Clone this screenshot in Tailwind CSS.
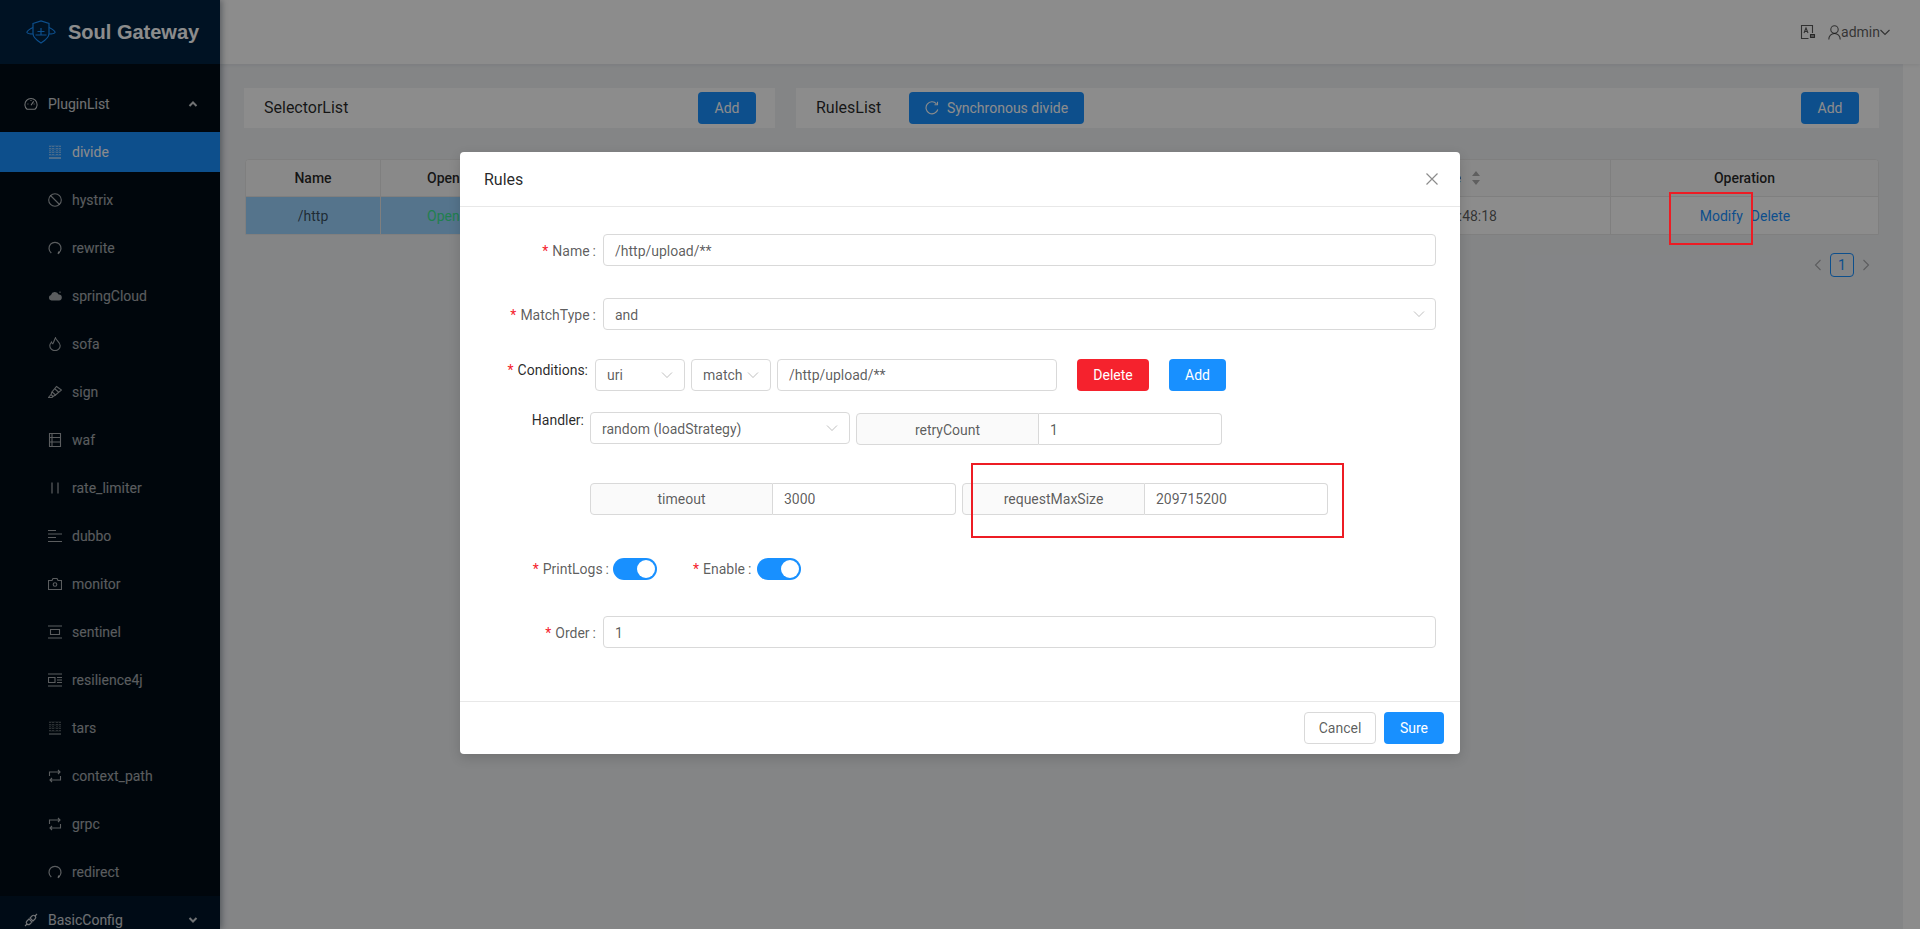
<!DOCTYPE html>
<html lang="en">
<head>
<meta charset="utf-8">
<title>Soul Gateway</title>
<script src="https://cdn.jsdelivr.net/npm/@tailwindcss/browser@4"></script>
</head>
<body class="m-0">
<div class="relative flex h-[929px] w-[1920px] overflow-hidden bg-white text-sm font-['Roboto',sans-serif] text-black/65">

  <!-- Sidebar -->
  <aside class="z-10 flex w-[220px] shrink-0 flex-col bg-[#000c17] text-white/65 shadow-[2px_0_6px_rgba(0,21,41,0.35)]">
    <div class="flex h-16 items-center bg-[#002140] pl-[26px] shrink-0">
      <svg class="h-[24px] w-[30px]" viewBox="0 0 30 24" fill="none" stroke="#1890ff" stroke-width="1.2"><path d="M7 3.500 15 1l8 2.500v10c0 4-4 7-8 9.500-4-2.500-8-5.500-8-9.500z"/><path d="M7 7.500C3 9.500.5 11 1 12.500c.8 1.500 5 1.500 6 1.500M23 7.500c4 2 6.500 3.500 6 5-.8 1.500-5 1.500-6 1.500"/><path d="M15 8v7M11.500 11.500h7M9.500 15h11"/></svg>
      <span class="ml-3 font-['Liberation_Sans',sans-serif] text-xl leading-none font-bold text-white">Soul Gateway</span>
    </div>
    <div class="flex-1">
      <div class="mt-5 flex h-10 items-center pl-6 pr-[22px] text-white/80">
        <svg class="mr-2.5 h-3.5 w-3.5" viewBox="0 0 16 16" fill="none" stroke="currentColor" stroke-width="1.2"><path d="M3.500 14h9a7 7 0 1 0-9 0z"/><path d="M8 9.500 11 5M4 8h1M11 8h1M8 3.500v1"/></svg>
        <span>PluginList</span>
        <svg class="ml-auto h-2.5 w-2.5" viewBox="0 0 10 10" fill="none" stroke="currentColor" stroke-width="2"><path d="M1.500 7 5 3.500 8.500 7"/></svg>
      </div>
      <div class="mt-2 flex h-10 items-center bg-[#1890ff] pl-12 text-white">
        <svg class="mr-2.5 h-3.5 w-3.5" viewBox="0 0 14 14" fill="none" stroke="currentColor"><path stroke-opacity="0.7" stroke-dasharray="1 1" d="M1.500 1h11M1.500 4h11M1.500 7h11M1.500 10h11M2 1v9.500M5 1v9.500M9 1v9.500M12 1v9.500"/><path d="M1 13h12"/></svg>
        <span>divide</span>
      </div>
      <div class="mt-2 flex h-10 items-center pl-12">
        <svg class="mr-2.5 h-3.5 w-3.5" viewBox="0 0 14 14" fill="none" stroke="currentColor" stroke-width="1.100"><circle cx="7" cy="7" r="6.300"/><path d="M2.500 2.500l9 9"/></svg>
        <span>hystrix</span>
      </div>
      <div class="mt-2 flex h-10 items-center pl-12">
        <svg class="mr-2.5 h-3.5 w-3.5" viewBox="0 0 14 14" fill="none" stroke="currentColor" stroke-width="1.200"><path d="M3.300 12A6 6 0 1 1 10.700 12"/><path d="M11 10.500 10.200 13" stroke-width="1.500"/></svg>
        <span>rewrite</span>
      </div>
      <div class="mt-2 flex h-10 items-center pl-12">
        <svg class="mr-2.5 h-3.5 w-3.5" viewBox="0 0 14 14" fill="currentColor"><path d="M3.500 11.500a2.800 2.800 0 0 1-.5-5.500 4 4 0 0 1 7.600-.5 3 3 0 0 1 .4 6z"/><path d="M11.500 2.500h1v1.500h-1z"/></svg>
        <span>springCloud</span>
      </div>
      <div class="mt-2 flex h-10 items-center pl-12">
        <svg class="mr-2.5 h-3.5 w-3.5" viewBox="0 0 14 14" fill="none" stroke="currentColor" stroke-width="1.100"><path d="M7.500 .8c.3 2.500 4.700 4.500 4.700 8a5.200 4.800 0 0 1-10.400 0c0-1.800 1-3 1.700-3.800.2 1 .6 1.500 1.300 1.800C6 4.500 6.500 2.500 7.500 .8z"/></svg>
        <span>sofa</span>
      </div>
      <div class="mt-2 flex h-10 items-center pl-12">
        <svg class="mr-2.5 h-3.5 w-3.5" viewBox="0 0 14 14" fill="none" stroke="currentColor" stroke-width="1.100"><path d="M8.500 1.500 13.500 5 7.500 10 4 7z"/><path d="M4 7l-1 2.500L5 11.500l2.500-1.500M3 9.500 .5 12.500h3.500L5 11.500M7 4l3.500 3"/></svg>
        <span>sign</span>
      </div>
      <div class="mt-2 flex h-10 items-center pl-12">
        <svg class="mr-2.5 h-3.5 w-3.5" viewBox="0 0 14 14" fill="none" stroke="currentColor" stroke-width="1.100"><path d="M1.500.5h11v13h-11zM1.500 4.500h11M1.500 9h11M4 .5v13"/></svg>
        <span>waf</span>
      </div>
      <div class="mt-2 flex h-10 items-center pl-12">
        <svg class="mr-2.5 h-3.5 w-3.5" viewBox="0 0 14 14" fill="none" stroke="currentColor" stroke-width="1.200"><path d="M4 1.500v11M10 1.500v11"/></svg>
        <span>rate_limiter</span>
      </div>
      <div class="mt-2 flex h-10 items-center pl-12">
        <svg class="mr-2.5 h-3.5 w-3.5" viewBox="0 0 14 14" fill="none" stroke="currentColor" stroke-width="1.100"><path d="M0 1.500h8M0 5h14M0 8.500h8M0 12.500h14"/></svg>
        <span>dubbo</span>
      </div>
      <div class="mt-2 flex h-10 items-center pl-12">
        <svg class="mr-2.5 h-3.5 w-3.5" viewBox="0 0 14 14" fill="none" stroke="currentColor" stroke-width="1.100"><path d="M.5 3.500h3.500L5 1.500h4l1 2h3.500v9H.5z"/><circle cx="7" cy="7.500" r="1.800"/></svg>
        <span>monitor</span>
      </div>
      <div class="mt-2 flex h-10 items-center pl-12">
        <svg class="mr-2.5 h-3.5 w-3.5" viewBox="0 0 14 14" fill="none" stroke="currentColor" stroke-width="1.100"><path d="M0 1h14M0 13h14M2.500 4.500h9v5h-9z"/></svg>
        <span>sentinel</span>
      </div>
      <div class="mt-2 flex h-10 items-center pl-12">
        <svg class="mr-2.5 h-3.5 w-3.5" viewBox="0 0 14 14" fill="none" stroke="currentColor" stroke-width="1.100"><path d="M0 1h14M0 13h14M.5 4.500h6.500v5H.5zM9 4.500h5M9 7h5M9 9.500h5"/></svg>
        <span>resilience4j</span>
      </div>
      <div class="mt-2 flex h-10 items-center pl-12">
        <svg class="mr-2.5 h-3.5 w-3.5" viewBox="0 0 14 14" fill="none" stroke="currentColor"><path stroke-opacity="0.7" stroke-dasharray="1 1" d="M1.500 1h11M1.500 4h11M1.500 7h11M1.500 10h11M2 1v9.500M5 1v9.500M9 1v9.500M12 1v9.500"/><path d="M1 13h12"/></svg>
        <span>tars</span>
      </div>
      <div class="mt-2 flex h-10 items-center pl-12">
        <svg class="mr-2.5 h-3.5 w-3.5" viewBox="0 0 14 14" fill="none" stroke="currentColor" stroke-width="1.100"><path d="M1.500 7V3h10.500M10 1l2 2-2 2M12.500 7v4H2M4 9l-2 2 2 2"/></svg>
        <span>context_path</span>
      </div>
      <div class="mt-2 flex h-10 items-center pl-12">
        <svg class="mr-2.5 h-3.5 w-3.5" viewBox="0 0 14 14" fill="none" stroke="currentColor" stroke-width="1.100"><path d="M1.500 7V3h10.500M10 1l2 2-2 2M12.500 7v4H2M4 9l-2 2 2 2"/></svg>
        <span>grpc</span>
      </div>
      <div class="mt-2 flex h-10 items-center pl-12">
        <svg class="mr-2.5 h-3.5 w-3.5" viewBox="0 0 14 14" fill="none" stroke="currentColor" stroke-width="1.200"><path d="M3.300 12A6 6 0 1 1 10.700 12"/><path d="M11 10.500 10.200 13" stroke-width="1.500"/></svg>
        <span>redirect</span>
      </div>
    </div>
    <div class="flex h-[33px] shrink-0 items-start bg-[#001529] pt-1 pl-6 pr-[22px] text-white/80">
      <div class="flex h-10 w-full items-center">
        <svg class="mr-2.5 h-3.5 w-3.5" viewBox="0 0 14 14" fill="none" stroke="currentColor" stroke-width="1.100"><path d="M1 13l2-2M11 3l2-2"/><path d="M5 6 3 8a2 2 0 0 0 3 3l2-2zM9 8l2-2a2 2 0 0 0-3-3L6 5z"/></svg>
        <span>BasicConfig</span>
        <svg class="ml-auto h-2.5 w-2.5" viewBox="0 0 10 10" fill="none" stroke="currentColor" stroke-width="2"><path d="M1.500 3 5 6.500 8.500 3"/></svg>
      </div>
    </div>
  </aside>

  <!-- Main -->
  <div class="flex min-w-0 flex-1 flex-col">
    <header class="z-[1] flex h-16 shrink-0 items-center justify-end bg-white pr-[30px] shadow-[0_1px_4px_rgba(0,21,41,0.08)]">
      <svg class="mr-3 h-4 w-4" viewBox="0 0 16 16" fill="none" stroke="currentColor" stroke-width="1.100"><path d="M12.500 9V1.500h-11v13h7"/><path d="M4 9l2-5 2 5M4.800 7.500h2.400"/><path d="M10.500 10.500h4v3h-4z" fill="currentColor" fill-opacity="0.6"/></svg>
      <svg class="h-[15px] w-[13px]" viewBox="0 0 13 15" fill="none" stroke="currentColor" stroke-width="1.100"><circle cx="6.500" cy="4.500" r="3.700"/><path d="M.8 14.500c0-3.500 2.500-6 5.700-6s5.700 2.500 5.700 6"/></svg>
      <span>admin</span>
      <svg class="h-3 w-2.5" viewBox="0 0 10 12" fill="none" stroke="currentColor" stroke-width="1.100"><path d="M.5 4 5 8.500 9.500 4"/></svg>
    </header>
    <main class="mr-[17px] flex-1 bg-[#f0f2f5] pt-6 pl-6 pr-6">
      <div class="flex gap-[21px]">
        <div class="flex h-10 w-[531px] items-start justify-between bg-white pt-1 pr-[19px] pl-5">
          <span class="mt-1.5 text-base leading-5 text-black/85">SelectorList</span>
          <button class="h-8 w-[58px] rounded bg-[#1890ff] text-white">Add</button>
        </div>
        <div class="flex h-10 flex-1 items-start bg-white pt-1 pr-5 pl-5">
          <span class="mt-1.5 w-[73px] text-base leading-5 text-black/85">RulesList</span>
          <button class="ml-5 flex h-8 w-[175px] items-center justify-center rounded bg-[#1890ff] text-white">
            <svg class="mr-2 h-3.5 w-3.5" viewBox="0 0 14 14" fill="none" stroke="currentColor" stroke-width="1.100"><path d="M12.800 8.500A6 6 0 1 1 11.500 2.800"/><path d="M12.500.8v3h-3"/></svg>
            Synchronous divide
          </button>
          <button class="ml-auto h-8 w-[58px] rounded bg-[#1890ff] text-white">Add</button>
        </div>
      </div>

      <div class="mt-[31px] ml-px overflow-hidden rounded-t border border-[#e8e8e8] bg-white">
        <div class="grid grid-cols-[135px_420px_810px_1fr] border-b border-[#e8e8e8] bg-[#fafafa] font-medium text-black/85">
          <div class="flex h-9 items-center justify-center border-r border-[#e8e8e8]">Name</div>
          <div class="flex h-9 items-center pl-[46px]">Open</div>
          <div class="flex h-9 items-center justify-end border-r border-[#e8e8e8] pr-[129px]">
            <span>UpdateTime</span>
            <svg class="ml-2.5 h-4 w-2.5 text-black/30" viewBox="0 0 10 16" fill="currentColor"><path d="M5 1 9 6H1zM5 15 1 10h8z"/></svg>
          </div>
          <div class="flex h-9 items-center justify-center">Operation</div>
        </div>
        <div class="grid grid-cols-[135px_420px_810px_1fr]">
          <div class="flex h-[37px] items-center justify-center border-r border-[#e8e8e8] bg-[#9bd3ff]">/http</div>
          <div class="flex h-[37px] items-center bg-[#9bd3ff] pl-[46px] text-[#3ce891]">Open</div>
          <div class="flex h-[37px] items-center justify-end border-r border-[#e8e8e8] pr-[113px]">:48:18</div>
          <div class="flex h-[37px] items-center justify-center gap-2 pl-[1px] text-[#1890ff]"><span>Modify</span><span>Delete</span></div>
        </div>
      </div>

      <div class="mt-[18px] flex items-center justify-end pr-[8px]">
        <svg class="h-3 w-2.5 text-black/30" viewBox="0 0 10 12" fill="none" stroke="currentColor" stroke-width="1.100"><path d="M7.500 1 2.500 6l5 5"/></svg>
        <span class="mx-[7px] flex h-6 w-6 items-center justify-center rounded border border-[#1890ff] text-[#1890ff]">1</span>
        <svg class="h-3 w-2.5 text-black/30" viewBox="0 0 10 12" fill="none" stroke="currentColor" stroke-width="1.100"><path d="M2.500 1l5 5-5 5"/></svg>
      </div>
    </main>
  </div>

  <!-- Mask -->
  <div class="absolute inset-0 z-20 bg-black/45"></div>

  <!-- Annotation on the page behind the dialog -->
  <div class="absolute top-[192px] left-[1669px] z-30 h-[53px] w-[84px] border-2 border-[#ed1c24]"></div>

  <!-- Modal -->
  <div class="absolute top-[152px] left-[460px] z-30 h-[602px] w-[1000px] rounded bg-white shadow-[0_4px_12px_rgba(0,0,0,0.15)]">
    <div class="flex h-[55px] items-center justify-between border-b border-[#e8e8e8] pr-[22px] pl-6">
      <span class="pt-[2px] text-base text-black/85">Rules</span>
      <svg class="h-3 w-3 text-black/45" viewBox="0 0 12 12" fill="none" stroke="currentColor" stroke-width="1.200"><path d="M.5.5l11 11M11.500.5l-11 11"/></svg>
    </div>

    <div class="h-[494px] pt-[27px]">
      <div class="flex h-8 items-center">
        <label class="w-[143px] pt-[2px] pr-1 text-right"><span class="mr-1 text-[#f5222d]">*</span>Name<span class="mx-[3px]">:</span></label>
        <div class="flex h-8 w-[833px] items-center rounded border border-[#d9d9d9] px-[11px] pt-[2px]">/http/upload/**</div>
      </div>
      <div class="mt-8 flex h-8 items-center">
        <label class="w-[143px] pt-[2px] pr-1 text-right"><span class="mr-1 text-[#f5222d]">*</span>MatchType<span class="mx-[3px]">:</span></label>
        <div class="flex h-8 w-[833px] items-center justify-between rounded border border-[#d9d9d9] pr-2.5 pl-[11px]">
          <span class="pt-[2px]">and</span>
          <svg class="h-3 w-3 text-black/25" viewBox="0 0 12 12" fill="none" stroke="currentColor"><path d="M1 3.500 6 8.500l5-5"/></svg>
        </div>
      </div>

      <div class="mt-[29px] flex h-8 items-start">
        <label class="w-[135px] pr-[7px] text-right leading-[22px] text-black/85"><span class="mr-1 text-[#f5222d]">*</span>Conditions:</label>
        <div class="flex h-8 w-[90px] items-center justify-between rounded border border-[#d9d9d9] pr-[11px] pl-[11px]">
          <span>uri</span>
          <svg class="h-3 w-3 text-black/25" viewBox="0 0 12 12" fill="none" stroke="currentColor"><path d="M1 3.500 6 8.500l5-5"/></svg>
        </div>
        <div class="ml-1.5 flex h-8 w-[80px] items-center justify-between rounded border border-[#d9d9d9] pr-[11px] pl-[11px]">
          <span>match</span>
          <svg class="h-3 w-3 text-black/25" viewBox="0 0 12 12" fill="none" stroke="currentColor"><path d="M1 3.500 6 8.500l5-5"/></svg>
        </div>
        <div class="ml-1.5 flex h-8 w-[280px] items-center rounded border border-[#d9d9d9] px-[11px]">/http/upload/**</div>
        <button class="ml-5 h-8 w-[72px] rounded bg-[#f5222d] text-white">Delete</button>
        <button class="ml-5 h-8 w-[57px] rounded bg-[#1890ff] text-white">Add</button>
      </div>

      <div class="mt-[21px] flex h-8 items-start">
        <label class="w-[130px] pr-[6px] text-right leading-4 text-black/85">Handler:</label>
        <div class="flex h-8 w-[260px] items-center justify-between rounded border border-[#d9d9d9] pr-[11px] pl-[11px]">
          <span class="pt-[2px]">random (loadStrategy)</span>
          <svg class="h-3 w-3 text-black/25" viewBox="0 0 12 12" fill="none" stroke="currentColor"><path d="M1 3.500 6 8.500l5-5"/></svg>
        </div>
        <div class="mt-px ml-1.5 flex h-8 w-[366px]">
          <div class="flex w-[183px] items-center justify-center rounded-l border border-[#d9d9d9] bg-[#fafafa] pt-[2px]">retryCount</div>
          <div class="flex w-[183px] items-center rounded-r border border-l-0 border-[#d9d9d9] px-[11px] pt-[2px]">1</div>
        </div>
      </div>

      <div class="mt-[39px] ml-[130px] flex h-8 gap-1.5">
        <div class="flex w-[366px]">
          <div class="flex w-[183px] items-center justify-center rounded-l border border-[#d9d9d9] bg-[#fafafa]">timeout</div>
          <div class="flex w-[183px] items-center rounded-r border border-l-0 border-[#d9d9d9] px-[11px]">3000</div>
        </div>
        <div class="flex w-[366px]">
          <div class="flex w-[183px] items-center justify-center rounded-l border border-[#d9d9d9] bg-[#fafafa]">requestMaxSize</div>
          <div class="flex w-[183px] items-center rounded-r border border-l-0 border-[#d9d9d9] px-[11px]">209715200</div>
        </div>
      </div>

      <div class="mt-[43px] flex h-[22px] items-center">
        <label class="w-[153px] pr-[1px] text-right"><span class="mr-1 text-[#f5222d]">*</span>PrintLogs<span class="mx-[3px]">:</span></label>
        <span class="flex h-[22px] w-11 items-center justify-end rounded-full bg-[#1890ff] pr-0.5"><span class="h-[18px] w-[18px] rounded-full bg-white"></span></span>
        <label class="ml-[36px] w-[64px] pr-[5px] text-right whitespace-nowrap"><span class="mr-1 text-[#f5222d]">*</span>Enable<span class="mx-[3px]">:</span></label>
        <span class="flex h-[22px] w-11 items-center justify-end rounded-full bg-[#1890ff] pr-0.5"><span class="h-[18px] w-[18px] rounded-full bg-white"></span></span>
      </div>

      <div class="mt-9 flex h-8 items-center">
        <label class="w-[143px] pt-[2px] pr-1 text-right"><span class="mr-1 text-[#f5222d]">*</span>Order<span class="mx-[3px]">:</span></label>
        <div class="flex h-8 w-[833px] items-center rounded border border-[#d9d9d9] px-[11px] pt-[2px]">1</div>
      </div>
    </div>

    <div class="flex h-[53px] items-start justify-end gap-2 border-t border-[#e8e8e8] pt-[10px] pr-4">
      <button class="h-8 w-[72px] rounded border border-[#d9d9d9] bg-white">Cancel</button>
      <button class="h-8 w-[60px] rounded bg-[#1890ff] text-white">Sure</button>
    </div>

    <!-- Annotation on the dialog -->
    <div class="absolute top-[311px] left-[511px] h-[75px] w-[373px] border-2 border-[#ed1c24]"></div>
  </div>
</div>
</body>
</html>
